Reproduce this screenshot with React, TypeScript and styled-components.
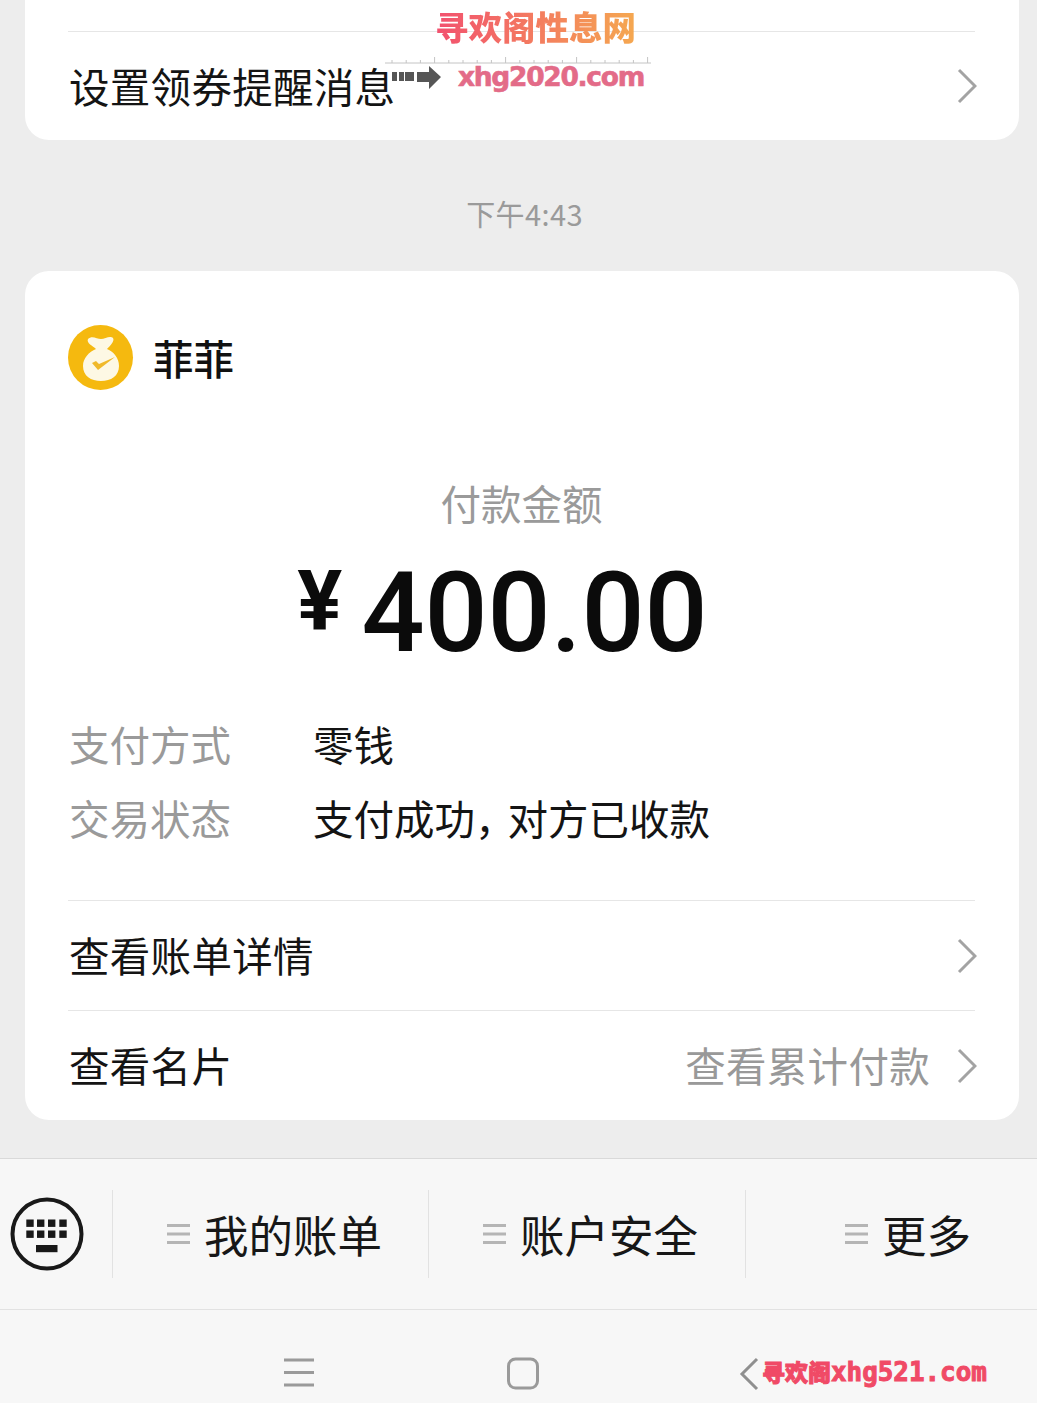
import React from 'react';
import styled, { createGlobalStyle } from 'styled-components';

const GlobalStyle = createGlobalStyle`
  html, body {
    margin: 0;
    padding: 0;
    background: #ededed;
  }
  body {
    font-family: "Noto Sans CJK SC", "Noto Sans", sans-serif;
    color: #111;
    overflow: hidden;
  }
`;

const Page = styled.div`
  position: relative;
  width: 1037px;
  height: 1403px;
  display: flex;
  flex-direction: column;
  overflow: hidden;
`;

const Card = styled.section<{ $top?: boolean }>`
  margin: 0 18px 0 25px;
  padding: ${p => (p.$top ? '31px 44px 0 43px' : '54px 44px 0 43px')};
  background: #fff;
  border-radius: ${p => (p.$top ? '0 0 24px 24px' : '24px')};
`;

const LinkRow = styled.div<{ $height: number }>`
  height: ${p => p.$height}px;
  display: flex;
  align-items: center;
  border-top: 1px solid #e6e6e6;
  font-size: 40.5px;
  letter-spacing: 0.3px;
  line-height: 1;
  color: #141414;
`;

const RowTitle = styled.span`
  flex: 1;
  padding-left: 1px;
`;

const RowHint = styled.span`
  color: #999;
  margin-right: 27px;
`;

const Chevron = styled.svg`
  width: 20px;
  height: 36px;
  margin-right: -2px;
  flex: none;
`;

const TimeStamp = styled.div`
  height: 131px;
  display: flex;
  align-items: center;
  justify-content: center;
  font-size: 29px;
  letter-spacing: 0.4px;
  color: #9a9a9a;
  padding: 14px 0 0 12px;
  box-sizing: border-box;
`;

const Payee = styled.div`
  display: flex;
  align-items: center;
  gap: 19px;
  height: 66px;
  font-size: 40.5px;
  font-weight: 500;
  line-height: 1;
  color: #111;
`;

const PayLabel = styled.div`
  margin-top: 88px;
  text-align: center;
  font-size: 40.5px;
  line-height: 48px;
  color: #9a9a9a;
`;

const Amount = styled.div`
  height: 122px;
  margin-top: 25px;
  display: flex;
  align-items: center;
  justify-content: center;
  padding-right: 38px;
  color: #0b0b0b;
  font-family: Roboto, "Noto Sans", sans-serif;
`;

const Yen = styled.span`
  font-size: 84px;
  font-weight: 700;
  line-height: 1;
  margin-right: 19px;
  margin-top: -22px;
`;

const Figure = styled.span`
  font-size: 111px;
  font-weight: 500;
  line-height: 1;
`;

const Details = styled.dl`
  margin: 33px 0 0;
  display: grid;
  grid-template-columns: 244px 1fr;
  grid-auto-rows: 74px;
  align-items: center;
  font-size: 40.5px;
  line-height: 1;
  padding-left: 1px;
  padding-bottom: 45px;
`;

const Term = styled.dt`
  color: #9a9a9a;
`;

const Value = styled.dd`
  margin: 0;
  color: #141414;
`;

const Comma = styled.span`
  letter-spacing: -8px;
`;

const MenuBar = styled.nav`
  margin-top: 38px;
  height: 152px;
  flex: none;
  display: flex;
  align-items: center;
  background: #f7f7f7;
  border-top: 1px solid #d9d9d9;
  border-bottom: 1px solid #e2e2e2;
  box-sizing: border-box;
`;

const KeyboardCell = styled.div`
  width: 112px;
  display: flex;
  padding-left: 10px;
  box-sizing: border-box;
`;

const MenuItem = styled.div<{ $width: number; $inset: number }>`
  width: ${p => p.$width}px;
  height: 88px;
  flex: none;
  display: flex;
  align-items: center;
  gap: 14px;
  padding-left: ${p => p.$inset}px;
  box-sizing: border-box;
  border-left: 1px solid #e2e2e2;
  font-size: 44.5px;
  line-height: 1;
  color: #171717;
`;

const MenuGlyph = styled.svg`
  width: 23px;
  height: 22px;
  flex: none;
`;

const SystemNav = styled.div`
  flex: 1;
  display: flex;
  align-items: flex-start;
  padding: 47px 0 0 283px;
  background: #f7f7f7;
`;

const NavIcon = styled.svg<{ $gap: number }>`
  margin-right: ${p => p.$gap}px;
  flex: none;
`;

const TopMark = styled.div`
  position: absolute;
  left: 435px;
  top: 3px;
  font-size: 33.5px;
  line-height: 46px;
  font-weight: 900;
  white-space: nowrap;
  background: linear-gradient(90deg, #f2506f, #f5a850);
  -webkit-background-clip: text;
  background-clip: text;
  color: transparent;
`;

const Ruler = styled.svg`
  position: absolute;
  left: 385px;
  top: 56px;
`;

const Arrow = styled.svg`
  position: absolute;
  left: 392px;
  top: 66px;
`;

const SiteMark = styled.div`
  position: absolute;
  left: 458px;
  top: 60px;
  font-family: "DejaVu Sans", sans-serif;
  font-size: 26.5px;
  line-height: 34px;
  font-weight: 700;
  color: #e36b88;
  letter-spacing: -1.3px;
  white-space: nowrap;
  -webkit-text-stroke: 0.6px #e36b88;
`;

const BottomMark = styled.div`
  position: absolute;
  left: 762px;
  top: 1355px;
  font-size: 23px;
  line-height: 33px;
  font-weight: 900;
  color: #f04a66;
  white-space: nowrap;
  -webkit-text-stroke: 1px #f04a66;
`;

const BottomLatin = styled.span`
  font-family: "DejaVu Sans Mono", monospace;
  font-weight: 700;
  font-size: 25.9px;
`;

const RowChevron = () => (
  <Chevron viewBox="0 0 20 36" fill="none">
    <path d="M2 2l16 16L2 34" stroke="#a3a3a3" strokeWidth="3" />
  </Chevron>
);

const BagLogo = () => (
  <svg width="66" height="66" viewBox="0 0 66 66" style={{ flex: 'none' }}>
    <circle cx="32.500" cy="32.500" r="32.500" fill="#f5b90f" />
    <path
      d="M20 14C24 10 29 14 33 14C37 14 42 10 45 13C47 16 42 21 39 24C46 27 51 33 51 41C51 51 43 56 33 56C23 56 15 51 15 41C15 33 21 27 28 24C25 21 18 18 20 14z"
      fill="#fdf8e4"
    />
    <path d="M24 38l6 7 17-13-16 7-3-3z" fill="#f0b92a" />
  </svg>
);

const KeyboardIcon = () => (
  <svg width="74" height="74" viewBox="0 0 74 74">
    <circle cx="37" cy="37" r="34.5" fill="none" stroke="#191919" strokeWidth="4" />
    <g fill="#191919">
      {[16.3, 27, 38, 49.3].map(x => (
        <React.Fragment key={x}>
          <rect x={x} y="22.500" width="7.400" height="7.400" />
          <rect x={x} y="33.500" width="7.400" height="7.400" />
        </React.Fragment>
      ))}
      <rect x="26" y="48" width="21.500" height="7.200" />
    </g>
  </svg>
);

const BarsGlyph = () => (
  <MenuGlyph viewBox="0 0 23 22">
    <path d="M0 2.500h23M0 11h23M0 19.500h23" stroke="#b5b5b5" strokeWidth="3" />
  </MenuGlyph>
);

const menuItems = [
  { label: '我的账单', width: 316, inset: 54 },
  { label: '账户安全', width: 317, inset: 54 },
  { label: '更多', width: 292, inset: 99 },
];

const rulerTicks = Array.from({ length: 19 }, (_, i) => i);

export default function App() {
  return (
    <Page>
      <GlobalStyle />

      <Card $top>
        <LinkRow $height={108}>
          <RowTitle>设置领券提醒消息</RowTitle>
          <RowChevron />
        </LinkRow>
      </Card>

      <TimeStamp>下午4:43</TimeStamp>

      <Card>
        <Payee>
          <BagLogo />
          <span>菲菲</span>
        </Payee>
        <PayLabel>付款金额</PayLabel>
        <Amount>
          <Yen>¥</Yen>
          <Figure>400.00</Figure>
        </Amount>
        <Details>
          <Term>支付方式</Term>
          <Value>零钱</Value>
          <Term>交易状态</Term>
          <Value>
            支付成功<Comma>，</Comma>对方已收款
          </Value>
        </Details>
        <LinkRow $height={109}>
          <RowTitle>查看账单详情</RowTitle>
          <RowChevron />
        </LinkRow>
        <LinkRow $height={109}>
          <RowTitle>查看名片</RowTitle>
          <RowHint>查看累计付款</RowHint>
          <RowChevron />
        </LinkRow>
      </Card>

      <MenuBar>
        <KeyboardCell>
          <KeyboardIcon />
        </KeyboardCell>
        {menuItems.map(item => (
          <MenuItem key={item.label} $width={item.width} $inset={item.inset}>
            <BarsGlyph />
            <span>{item.label}</span>
          </MenuItem>
        ))}
      </MenuBar>

      <SystemNav>
        <NavIcon $gap={192} width="32" height="32" viewBox="0 0 32 32">
          <path d="M1 3h30M1 15.500h30M1 28h30" stroke="#9a9a9a" strokeWidth="3" />
        </NavIcon>
        <NavIcon $gap={200} width="32" height="33" viewBox="0 0 32 33">
          <rect x="1.500" y="2" width="29" height="29" rx="7" fill="none" stroke="#9a9a9a" strokeWidth="3" />
        </NavIcon>
        <NavIcon $gap={0} width="20" height="34" viewBox="0 0 20 34">
          <path d="M18 2L3 17l15 15" fill="none" stroke="#8f8f8f" strokeWidth="3" />
        </NavIcon>
      </SystemNav>

      <TopMark>寻欢阁性息网</TopMark>
      <Ruler width="266" height="8" viewBox="0 0 266 8">
        <path d="M0 7h266" stroke="#c4c4c4" strokeWidth="1" />
        {rulerTicks.map(i => (
          <path key={i} d={`M${7 + i * 14.2} ${i % 5 === 3 ? 1 : 4}V7`} stroke="#c4c4c4" strokeWidth="1" />
        ))}
      </Ruler>
      <Arrow width="49" height="24" viewBox="0 0 49 24">
        <path d="M0 6h5v9H0zM7 6h5v9H7zM13 6h9v9h-9zM25 6h12V0l12 11-12 12v-7H25z" fill="#565656" />
      </Arrow>
      <SiteMark>xhg2020.com</SiteMark>
      <BottomMark>
        寻欢阁<BottomLatin>xhg521.com</BottomLatin>
      </BottomMark>
    </Page>
  );
}
